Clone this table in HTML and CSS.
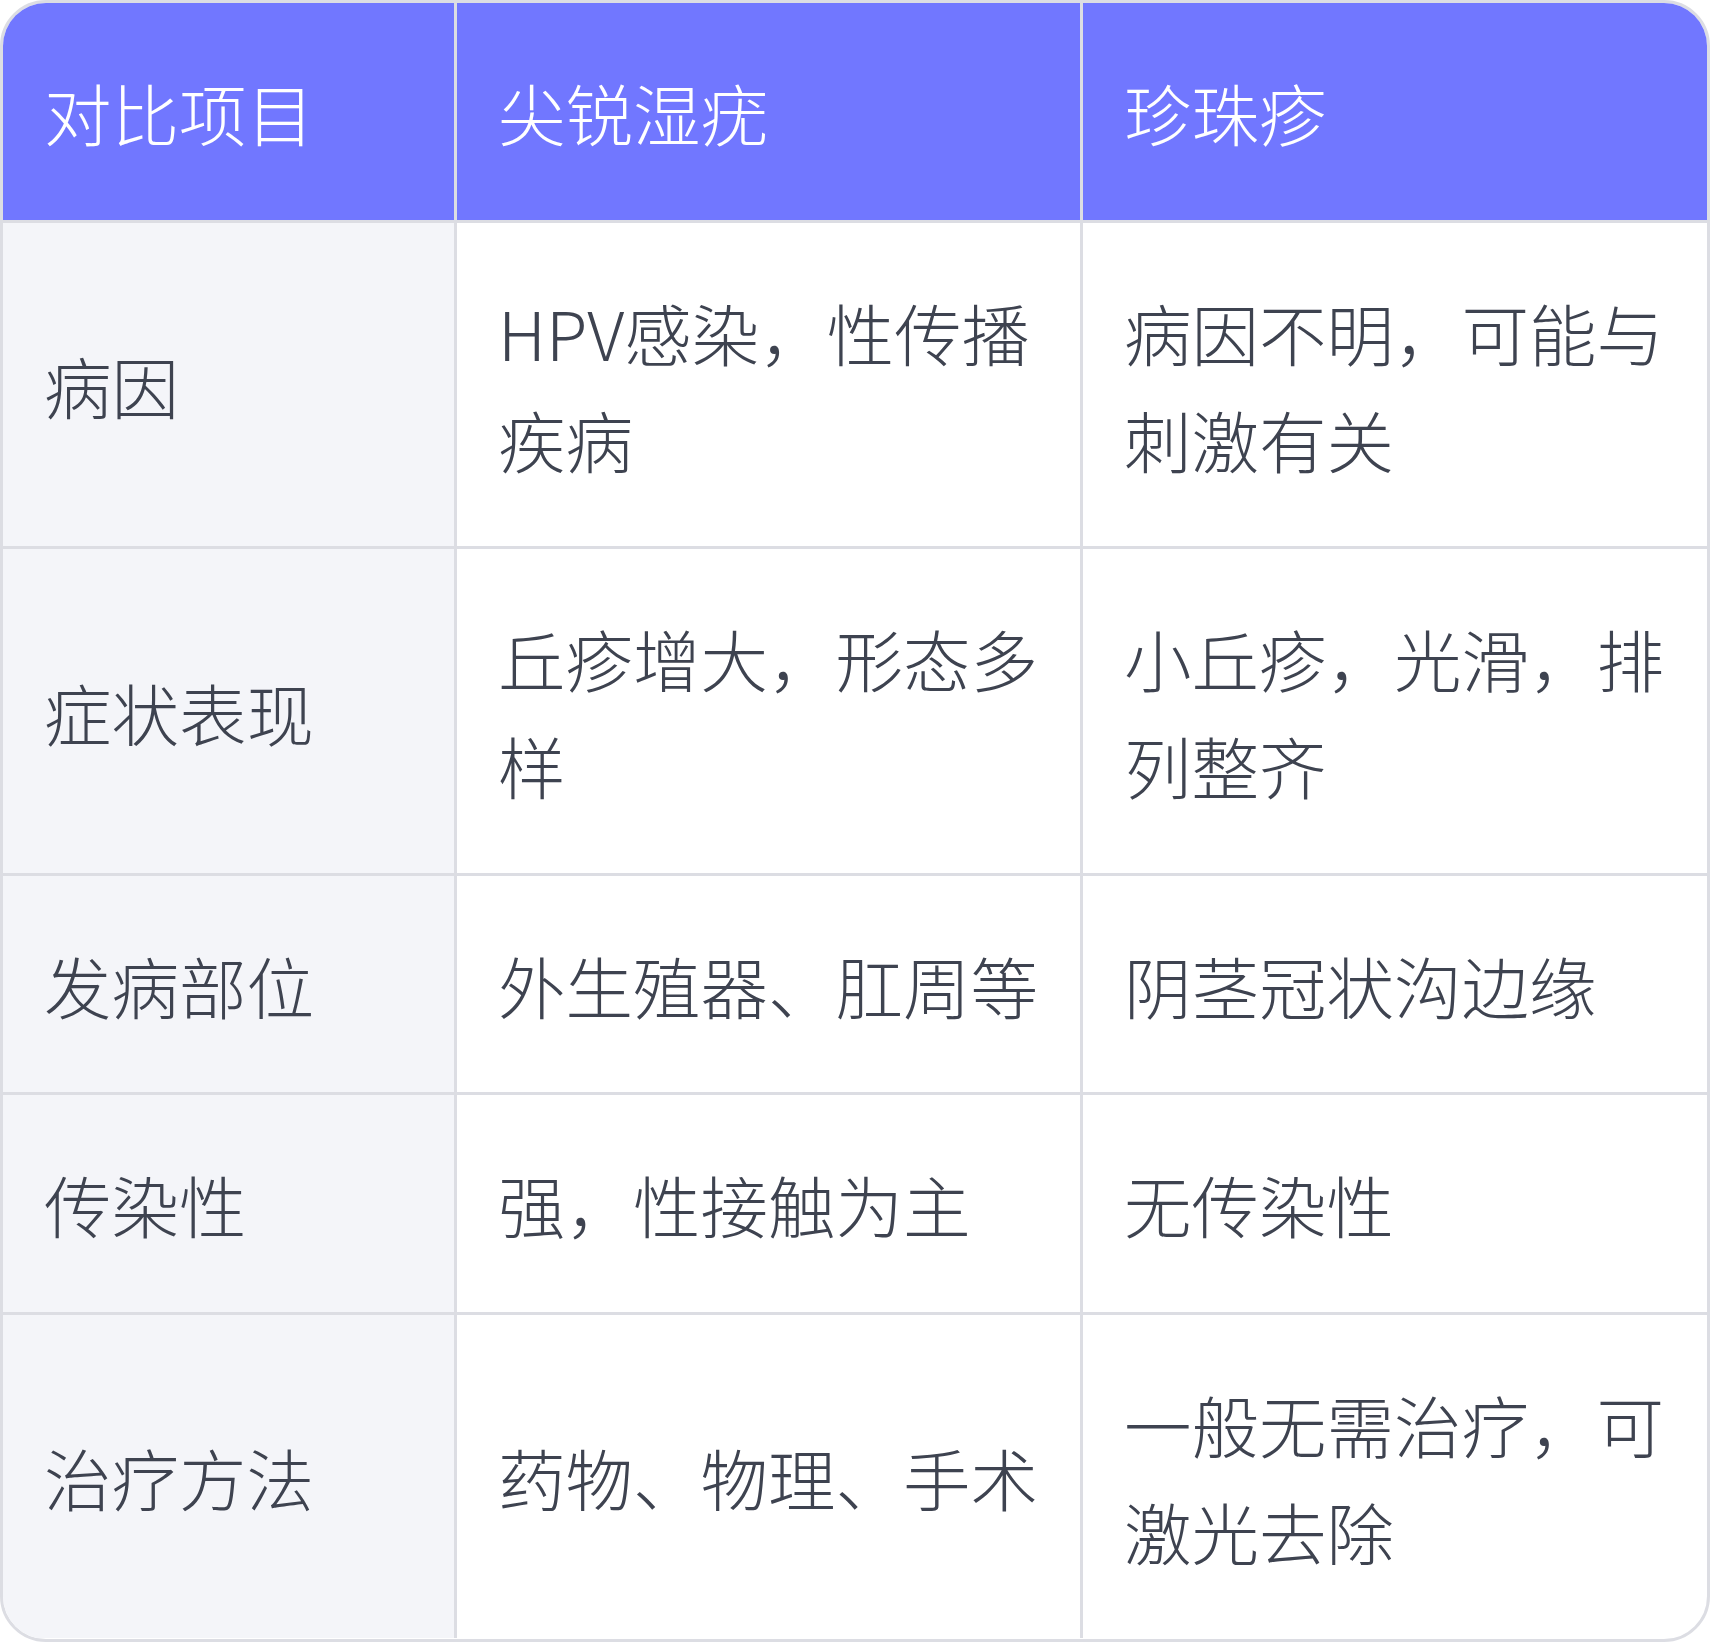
FILE: index.html
```html
<!DOCTYPE html>
<html lang="zh-CN">
<head>
<meta charset="utf-8">
<title>尖锐湿疣与珍珠疹对比</title>
<link rel="stylesheet" href="styles.css">
</head>
<body>
<div class="card">
  <table class="compare">
    <colgroup>
      <col class="c1">
      <col class="c2">
      <col class="c3">
    </colgroup>
    <thead>
      <tr>
        <th>对比项目</th>
        <th>尖锐湿疣</th>
        <th>珍珠疹</th>
      </tr>
    </thead>
    <tbody>
      <tr>
        <td class="label">病因</td>
        <td>HPV感染，性传播疾病</td>
        <td>病因不明，可能与刺激有关</td>
      </tr>
      <tr>
        <td class="label">症状表现</td>
        <td>丘疹增大，形态多样</td>
        <td>小丘疹，光滑，排列整齐</td>
      </tr>
      <tr>
        <td class="label">发病部位</td>
        <td>外生殖器、肛周等</td>
        <td>阴茎冠状沟边缘</td>
      </tr>
      <tr>
        <td class="label">传染性</td>
        <td>强，性接触为主</td>
        <td>无传染性</td>
      </tr>
      <tr>
        <td class="label">治疗方法</td>
        <td>药物、物理、手术</td>
        <td>一般无需治疗，可激光去除</td>
      </tr>
    </tbody>
  </table>
</div>
</body>
</html>
```

FILE: styles.css
```css
* { box-sizing: border-box; }
html, body {
  margin: 0;
  padding: 0;
  background: #ffffff;
}
.card {
  width: 1710px;
  height: 1642px;
  border: 3px solid #dcdde3;
  border-radius: 46px;
  overflow: hidden;
  background: #ffffff;
}
.compare {
  width: 100%;
  border-collapse: separate;
  border-spacing: 0;
  table-layout: fixed;
  font-family: "Noto Sans CJK KR", "Noto Sans CJK SC", "Noto Sans", sans-serif;
  font-weight: 300;
  font-size: 67.5px;
  line-height: 107px;
  color: #3e4350;
}
.c1 { width: 454px; }
.c2 { width: 626px; }
.c3 { width: 624px; }
.compare th,
.compare td {
  padding: 55px 38px 54.5px 41px;
  text-align: left;
  vertical-align: middle;
  border-right: 3px solid #dcdde3;
  border-bottom: 3px solid #dcdde3;
  font-weight: 300;
}
.compare th:last-child,
.compare td:last-child {
  border-right: none;
}
.compare tbody tr:last-child td {
  border-bottom: none;
}
.compare th {
  background: #7177ff;
  color: #ffffff;
}
.compare td.label {
  background: #f4f5f9;
}
```
